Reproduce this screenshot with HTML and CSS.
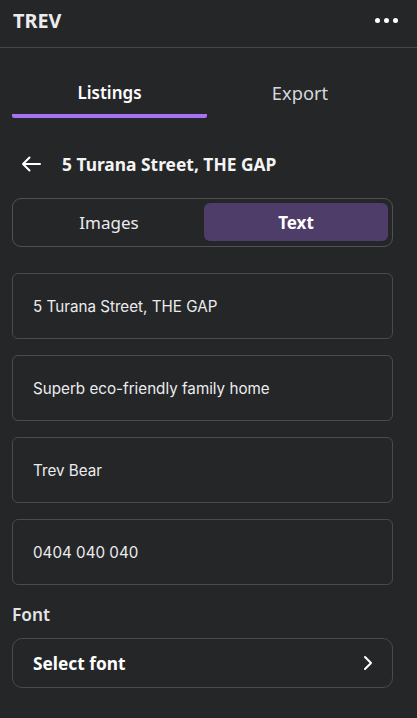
FILE: index.html
```html
<!DOCTYPE html>
<html>
<head>
<meta charset="utf-8">
<link rel="stylesheet" href="styles.css">
</head>
<body>
<div class="app">
  <header class="topbar">
    <div class="brand">TREV</div>
    <div class="more"><span></span><span></span><span></span></div>
  </header>
  <div class="content">
    <nav class="tabs">
      <div class="tab active">Listings</div>
      <div class="tab">Export</div>
    </nav>
    <div class="back-row">
      <svg class="back" width="20" height="16" viewBox="0 0 20 16"><path d="M19 8H2M8.5 1.5L2 8l6.5 6.5" fill="none" stroke="#ffffff" stroke-width="2" stroke-linecap="round" stroke-linejoin="round"/></svg>
      <div class="title">5 Turana Street, THE GAP</div>
    </div>
    <div class="segmented">
      <div class="seg">Images</div>
      <div class="seg on">Text</div>
    </div>
    <div class="fields">
      <div class="field">5 Turana Street, THE GAP</div>
      <div class="field">Superb eco-friendly family home</div>
      <div class="field">Trev Bear</div>
      <div class="field">0404 040 040</div>
    </div>
    <div class="label">Font</div>
    <div class="select">
      <span>Select font</span>
      <svg width="10" height="16" viewBox="0 0 10 16"><path d="M2 2l6 6-6 6" fill="none" stroke="#ffffff" stroke-width="2" stroke-linecap="round" stroke-linejoin="round"/></svg>
    </div>
  </div>
</div>
</body>
</html>
```
FILE: styles.css
```css
html, body {
  margin: 0;
  padding: 0;
  background: #252628;
  color: #ffffff;
  font-family: "Noto Sans", "Open Sans", sans-serif;
}
.app {
  width: 417px;
  height: 718px;
  overflow: hidden;
}
.topbar {
  height: 40px;
  padding: 0 19px 7px 13px;
  display: flex;
  align-items: center;
  justify-content: space-between;
  border-bottom: 1px solid #46474a;
}
.brand {
  font-weight: 700;
  font-size: 19.8px;
  color: #ececee;
}
.more {
  display: flex;
  gap: 4px;
}
.more span {
  width: 5px;
  height: 5px;
  border-radius: 50%;
  background: #fff;
}
.content {
  padding: 0 24px 0 12px;
}
.tabs {
  display: flex;
  margin-top: 33px;
}
.tab {
  flex: 1;
  text-align: center;
  font-size: 18.3px;
  line-height: 24px;
  padding-bottom: 9px;
  color: #d6d7da;
  border-bottom: 4px solid transparent;
}
.tab.active {
  flex: 0 0 195px;
  font-size: 17px;
  color: #ffffff;
  font-weight: 600;
  border-bottom-color: #a571f7;
  border-radius: 2px;
}
.back-row {
  display: flex;
  align-items: center;
  margin: 33px 0 0 9px;
  height: 26px;
}
.back { margin-right: 21px; }
.title {
  font-weight: 700;
  font-size: 17.4px;
  color: #f4f4f5;
}
.segmented {
  margin-top: 21px;
  height: 49px;
  box-sizing: border-box;
  border: 1px solid #505154;
  border-radius: 9px;
  display: flex;
  gap: 3px;
  padding: 4px 4px 5px;
}
.seg {
  flex: 1;
  display: flex;
  align-items: center;
  justify-content: center;
  font-size: 17px;
  color: #ebebee;
  border-radius: 6px;
}
.seg.on {
  background: #4e3d69;
  font-weight: 700;
  color: #fff;
}
.fields {
  margin-top: 26px;
  display: flex;
  flex-direction: column;
  gap: 16px;
}
.field {
  height: 66px;
  box-sizing: border-box;
  border: 1px solid #4a4b4e;
  border-radius: 6px;
  padding: 0 20px;
  display: flex;
  align-items: center;
  font-family: "Inter", "Noto Sans", sans-serif;
  font-size: 15.2px;
  color: #ececee;
}
.label {
  margin-top: 19px;
  font-weight: 600;
  font-size: 17.3px;
  color: #e4e4e7;
  line-height: 22px;
}
.select {
  margin-top: 12px;
  height: 50px;
  box-sizing: border-box;
  border: 1px solid #4a4b4e;
  border-radius: 10px;
  display: flex;
  align-items: center;
  justify-content: space-between;
  padding: 0 19px 0 20px;
  font-weight: 700;
  font-size: 17.3px;
}
```
